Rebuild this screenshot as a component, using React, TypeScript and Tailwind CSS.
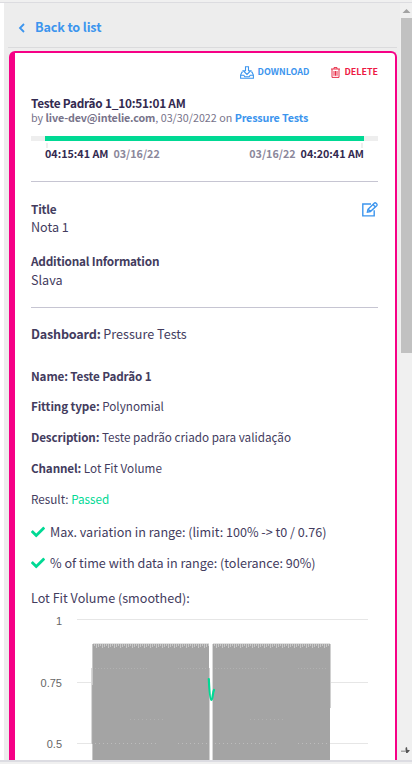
import type { ReactNode } from "react";

function Row({ className = "", children }: { className?: string; children: ReactNode }) {
  return <div className={`flex shrink-0 items-center whitespace-pre ${className}`}>{children}</div>;
}

function Label({ className = "tracking-[-0.14px]", children }: { className?: string; children: ReactNode }) {
  return <b className={`font-bold ${className}`}>{children}</b>;
}

function Check() {
  return (
    <svg className="mr-[5px] h-[14px] w-[14px] shrink-0" viewBox="0 0 512 512" fill="#00d994">
      <path d="M173.898 439.404l-166.4-166.4c-9.997-9.997-9.997-26.206 0-36.204l36.203-36.204c9.997-9.998 26.207-9.998 36.204 0L192 312.69 432.095 72.596c9.997-9.997 26.207-9.997 36.204 0l36.203 36.204c9.997 9.997 9.997 26.206 0 36.204l-294.4 294.401c-9.998 9.997-26.207 9.997-36.204-.001z" />
    </svg>
  );
}

function Teeth({ x, width }: { x: number; width: number }) {
  const n = Math.floor(width / 2);
  return (
    <g>
      <rect x={x} y={34} width={width} height={130} fill="#a4a4a4" />
      <rect x={x} y={33} width={width} height={1} fill="#e2e2e2" />
      {Array.from({ length: n }, (_, i) => (
        <rect key={i} x={x + 1 + i * 2} y={34} width={1} height={2 + ((i * 2) % 3)} fill="#c8c8c8" />
      ))}
      <path d={`M${x + 2} 58.5H${x + width * 0.47}M${x + width * 0.73} 58.5H${x + width - 2}`} stroke="#b1b1b1" strokeDasharray="1 2" />
      <path d={`M${x + width * 0.32} 109.5H${x + width * 0.6}`} stroke="#b1b1b1" strokeDasharray="1 3" />
      <path d={`M${x + 2} 133.5H${x + width * 0.55}M${x + width * 0.73} 133.5H${x + width - 2}`} stroke="#bcbcbc" strokeDasharray="1 3" />
    </g>
  );
}

function Chart() {
  return (
    <svg className="block h-[150px] w-[347px] shrink-0" viewBox="0 0 347 150" shapeRendering="crispEdges">
      <path d="M46 9.5H337M46 72.5H337M46 133.5H337" stroke="#e6e6e6" />
      <rect x="61" y="34" width="1" height="130" fill="#c8c8c8" />
      <rect x="60" y="58" width="1" height="76" fill="#d8d8d8" />
      <rect x="61" y="75" width="1" height="59" fill="#a9a9a9" />
      <rect x="178" y="34" width="4" height="130" fill="#ffffff" />
      <Teeth x={62} width={116} />
      <Teeth x={182} width={117} />
      <rect x="178" y="58" width="1" height="106" fill="#d0d0d0" />
      <rect x="181" y="34" width="1" height="130" fill="#d8d8d8" />
      <rect x="299" y="34" width="1" height="64" fill="#d0d0d0" />
      <path d="M177.8 69C178.2 77 178.8 90 180.3 90C181.8 90 181.6 82 183 80" fill="none" stroke="#00d994" strokeWidth="2.2" strokeLinecap="round" shapeRendering="auto" />
      <g fill="#666666" fontSize="11" textAnchor="end" fontFamily="'Liberation Sans', Arial, sans-serif" shapeRendering="auto">
        <text x="31" y="15">1</text>
        <text x="31" y="77">0.75</text>
        <text x="31" y="138">0.5</text>
      </g>
    </svg>
  );
}

export default function App() {
  return (
    <div className="flex h-[764px] w-[412px] flex-col overflow-hidden bg-[#f0f0f0] font-['Noto_Sans_CJK_SC','Noto_Sans',sans-serif] text-[12.6px] text-[#433c5e]">
      <div className="h-[3px] shrink-0 border-b border-[#dcdce0]" />
      <div className="flex h-[757px] shrink-0 overflow-hidden bg-white pl-1">
        <div className="flex w-[396px] shrink-0 flex-col bg-[#ededed]">
          <div className="ml-1 mr-[3px] flex h-[45px] shrink-0 items-center border-b border-[#dbdbdd] pl-[10px] pt-[5px] text-[#3c95ee]">
            <svg className="mr-[9px] h-[10px] w-[8px]" viewBox="0 0 8 10" fill="none" stroke="currentColor" strokeWidth="1.8"><path d="M6 1L2 5l4 4" /></svg>
            <Label>Back to list</Label>
          </div>
          <div className="ml-[5px] mt-[3px] flex h-[730px] w-[388px] shrink-0 flex-col rounded-t-[6px] border-l-[6px] border-r-2 border-t-2 border-[#f60086] bg-white pl-4 pr-[17px]">
            <div className="mt-[9px] flex h-[20px] shrink-0 items-center justify-end text-[8.95px] font-bold">
              <svg className="mr-1 h-[13px] w-[14px]" viewBox="0 0 14 13" fill="none" stroke="#3c95ee" strokeWidth="1.1"><path d="M5.5.7h3v4h2.2L7 8.4 3.3 4.7h2.2zM3 6H2L.6 9v3.3h12.8V9L12 6h-1M.6 9.2h3.2l1 1.5h4.4l1-1.5h3.2" /></svg>
              <span className="text-[#3c95ee]">DOWNLOAD</span>
              <svg className="ml-[22px] mr-1 h-[11px] w-[9px]" viewBox="0 0 9 11" fill="none" stroke="#e8304a" strokeWidth="1"><path d="M0 2h9M3 2V.6h3V2M1 2v8.4h7V2M3 4v4.8M4.5 4v4.8M6 4v4.8" /></svg>
              <span className="text-[#ed1945]">DELETE</span>
            </div>
            <Row className="mt-[13px] h-[16px] text-[11.8px] leading-4 text-[#332a50]"><Label className="tracking-[-0.22px]">Teste Padrão 1_10:51:01 AM</Label></Row>
            <Row className="h-[14px] text-[10.74px] leading-[14px] text-[#77738a]">by <Label>live-dev@intelie.com</Label>, 03/30/2022 on <Label className="tracking-[-0.14px] text-[#3c95ee]">Pressure Tests</Label></Row>
            <div className="mt-[11px] flex h-[5px] shrink-0 bg-[#eeeeee] pl-[14px] pr-[14px]"><div className="h-full w-full bg-[#00d994]" /></div>
            <div className="mx-[14px] mt-[2px] flex h-[5px] shrink-0 justify-between px-px"><i className="w-[2px] bg-[#eeeeee]" /><i className="w-[2px] bg-[#eeeeee]" /></div>
            <div className="mx-[14px] mt-[-1px] flex h-[14px] shrink-0 items-center justify-between whitespace-pre text-[10.74px] font-bold text-[#332a50]">
              <span>04:15:41 AM<span className="ml-[5px] text-[#8b879b]">03/16/22</span></span>
              <span><span className="mr-[5px] text-[#8b879b]">03/16/22</span>04:20:41 AM</span>
            </div>
            <div className="mt-[20px] h-px shrink-0 bg-[#c6c5d2]" />
            <div className="mt-[18px] flex h-[36px] shrink-0 justify-between">
              <div><Row className="h-[18px] text-[11.8px]"><Label className="tracking-[-0.22px]">Title</Label></Row><Row className="h-[18px]">Nota 1</Row></div>
              <svg className="mt-[2px] h-[15px] w-[16px]" viewBox="0 0 16 15" fill="none" stroke="#3c95ee" strokeWidth="1.4"><path d="M9 2H.8v11.9h11.4V8.2M5.4 10.1l.6-2.8 6.2-6.1c1.2-1.1 3.9 1.1 2.5 2.5L8.4 9.6zM11 2.4l2.5 2.5M6.3 7.3l2.1 2.1" /></svg>
            </div>
            <Row className="mt-[16px] h-[18px] text-[11.8px]"><Label className="tracking-[-0.22px]">Additional Information</Label></Row>
            <Row className="mt-px h-[18px]">Slava</Row>
            <div className="mt-[18px] h-px shrink-0 bg-[#c6c5d2]" />
            <Row className="mt-[16px] h-[20px]"><Label className="tracking-[-0.2px]">Dashboard:</Label> Pressure Tests</Row>
            <Row className="mt-[22px] h-[20px] text-[11.7px]"><Label>Name: Teste Padrão 1</Label></Row>
            <Row className="mt-[10px] h-[20px] text-[11.7px]"><Label>Fitting type:</Label> Polynomial</Row>
            <Row className="mt-[11px] h-[20px] text-[11.7px]"><Label>Description:</Label> Teste padrão criado para validação</Row>
            <Row className="mt-[11px] h-[20px] text-[11.7px]"><Label>Channel:</Label> Lot Fit Volume</Row>
            <Row className="mt-[11px] h-[20px] text-[11.7px]">Result: <span className="text-[#00d994]">Passed</span></Row>
            <Row className="mt-[13px] h-[20px]"><Check />Max. variation in range: (limit: 100% -&gt; t0 / 0.76)</Row>
            <Row className="mt-[11px] h-[20px]"><Check />% of time with data in range: (tolerance: 90%)</Row>
            <Row className="mt-[15px] h-[20px]">Lot Fit Volume (smoothed):</Row>
            <div className="mt-[2px] h-[150px] shrink-0"><Chart /></div>
          </div>
        </div>
        <div className="flex w-[12px] shrink-0 flex-col items-end bg-[#f0f0f0]">
          <svg className="h-[15px] w-[11px] shrink-0" viewBox="0 0 11 15"><path d="M1.5 10h8L5.5 6z" fill="#a3a3a3" /></svg>
          <div className="h-[335px] w-[11px] shrink-0 bg-[#c1c1c1]" />
          <svg className="mt-[391px] h-[12px] w-[11px] shrink-0" viewBox="0 0 11 12"><path d="M0 8V6.5h4V4l1.5-1v6H5V8z" fill="#a8a8a8" /><path d="M5 3l1.2.7v2L9 6.3 6.5 9H5V7.5z" fill="#555" /></svg>
        </div>
      </div>
      <div className="h-[4px] shrink-0 border-t-2 border-[#dcdce2]" />
    </div>
  );
}
